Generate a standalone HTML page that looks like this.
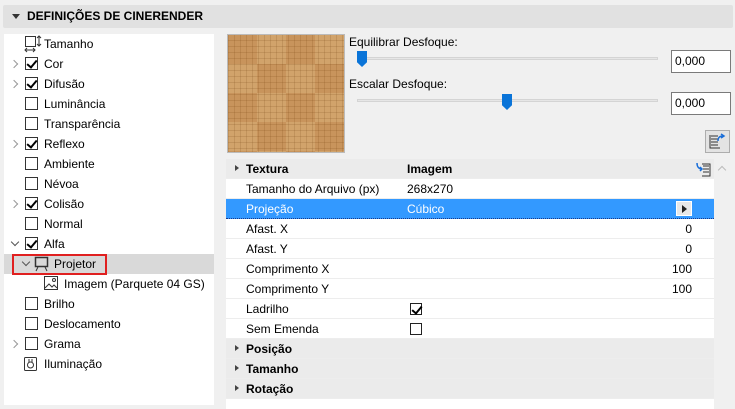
<!DOCTYPE html>
<html><head><meta charset="utf-8"><style>
*{margin:0;padding:0;box-sizing:border-box}
body{width:735px;height:405px;background:#f0f0f0;font-family:"Liberation Sans",sans-serif;font-size:12px;color:#000;position:relative;overflow:hidden}
.abs{position:absolute}
#hdr{left:3px;top:5px;width:730px;height:23px;background:#e1e1e1;border-radius:2px;font-weight:bold;font-size:12px;line-height:23px;padding-left:24px}
#hdr:before{content:"";position:absolute;left:9px;top:9px;border-left:4px solid transparent;border-right:4px solid transparent;border-top:5px solid #333}
#left{left:4px;top:34px;width:210px;height:371px;background:#fff}
.r{position:absolute;left:0;width:210px;height:20px;line-height:20px}
.r .t{position:absolute;left:40px}
.cb{position:absolute;left:21px;top:3px;width:13px;height:13px;border:1px solid #333;background:#fff}
.cb.c:after{content:"";position:absolute;left:3px;top:0px;width:4px;height:8px;border:solid #000;border-width:0 2px 2px 0;transform:rotate(40deg)}
.ch{position:absolute;left:7px;top:7px;width:6px;height:6px;border:solid #999;border-width:1.5px 1.5px 0 0;transform:rotate(45deg)}
.cd{position:absolute;left:8px;top:5px;width:6px;height:6px;border:solid #555;border-width:0 1.5px 1.5px 0;transform:rotate(45deg)}
#tex{left:227px;top:34px;width:118px;height:119px;border:1px solid #bbb;background:
repeating-linear-gradient(90deg,rgba(120,70,20,.18) 0 1px,transparent 1px 6px),
repeating-linear-gradient(0deg,rgba(120,70,20,.18) 0 1px,transparent 1px 6px),
conic-gradient(from 0deg at 50% 50%,#d1a36b 0 25%,#c8945c 0 50%,#d1a36b 0 75%,#c8945c 0);background-size:6px 6px,6px 6px,58px 58px}
.lbl{font-size:12px}
.track{height:3px;background:#e6e6e6;border:1px solid #d4d4d4}
.thumb{width:10px;height:16px;background:#0a74d8;clip-path:polygon(0 0,100% 0,100% 70%,50% 100%,0 70%)}
.inp{width:60px;height:23px;background:#fff;border:1px solid #7a7a7a;line-height:21px;padding-left:3px}
#tbl{left:226px;top:159px;width:488px}
.tr{position:relative;height:20px;line-height:20px;border-bottom:1px solid #ededed;background:#fff}
.tr .a{position:absolute;left:20px}
.tr .b{position:absolute;left:181px}
.tr .v{position:absolute;right:22px}
.g{background:#ebebeb;font-weight:bold}
.g:before{content:"";position:absolute;left:9px;top:6px;border-top:3.5px solid transparent;border-bottom:3.5px solid transparent;border-left:4px solid #444}
.sel{background:#3399ff;color:#fff;border-bottom:1px dotted #1a3a8a}
.tcb{position:absolute;left:184px;top:4px;width:12px;height:12px;border:1px solid #222;background:#fff}
</style></head><body>
<div id="hdr" class="abs">DEFINIÇÕES DE CINERENDER</div>
<div id="left" class="abs">
<div class="r" style="top:0"><svg class="abs" style="left:20px;top:1px" width="18" height="18"><rect x="1.5" y="1.5" width="10" height="10" fill="none" stroke="#333"/><path d="M15 1v10M13 3l2-2 2 2M13 9l2 2 2-2M1 15h10M3 13l-2 2 2 2M9 13l2 2-2 2" stroke="#333" fill="none"/></svg><span class="t">Tamanho</span></div>
<div class="r" style="top:20px"><i class="ch"></i><i class="cb c"></i><span class="t">Cor</span></div>
<div class="r" style="top:40px"><i class="ch"></i><i class="cb c"></i><span class="t">Difusão</span></div>
<div class="r" style="top:60px"><i class="cb"></i><span class="t">Luminância</span></div>
<div class="r" style="top:80px"><i class="cb"></i><span class="t">Transparência</span></div>
<div class="r" style="top:100px"><i class="ch"></i><i class="cb c"></i><span class="t">Reflexo</span></div>
<div class="r" style="top:120px"><i class="cb"></i><span class="t">Ambiente</span></div>
<div class="r" style="top:140px"><i class="cb"></i><span class="t">Névoa</span></div>
<div class="r" style="top:160px"><i class="ch"></i><i class="cb c"></i><span class="t">Colisão</span></div>
<div class="r" style="top:180px"><i class="cb"></i><span class="t">Normal</span></div>
<div class="r" style="top:200px"><i class="cd"></i><i class="cb c"></i><span class="t">Alfa</span></div>
<div class="r" style="top:220px;background:#d9d9d9"><div class="abs" style="left:8px;top:0;width:95px;height:21px;border:2px solid #e02020"></div><i class="cd" style="left:19px"></i><svg class="abs" style="left:30px;top:2px" width="16" height="16"><rect x="1.5" y="1.5" width="12" height="9" fill="none" stroke="#333" stroke-width="1.5"/><path d="M4 11l-2 4M11 11l2 4" stroke="#333"/></svg><span class="t" style="left:50px">Projetor</span></div>
<div class="r" style="top:240px"><svg class="abs" style="left:40px;top:2px" width="15" height="15"><rect x="0.5" y="0.5" width="13" height="13" fill="#fff" stroke="#333"/><path d="M1 12l4-4 3 3 2-2 3 3" stroke="#333" fill="none"/><circle cx="10" cy="4" r="1.5" fill="none" stroke="#333"/></svg><span class="t" style="left:60px">Imagem (Parquete 04 GS)</span></div>
<div class="r" style="top:260px"><i class="cb"></i><span class="t">Brilho</span></div>
<div class="r" style="top:280px"><i class="cb"></i><span class="t">Deslocamento</span></div>
<div class="r" style="top:300px"><i class="ch"></i><i class="cb"></i><span class="t">Grama</span></div>
<div class="r" style="top:320px"><svg class="abs" style="left:20px;top:2px" width="14" height="16"><rect x="0.5" y="1.5" width="12" height="13" rx="1" fill="none" stroke="#333"/><circle cx="6.5" cy="9" r="3" fill="none" stroke="#333"/><path d="M5 3v3M8 3v3" stroke="#333"/></svg><span class="t">Iluminação</span></div>
</div>
<div id="tex" class="abs"></div>
<div class="abs lbl" style="left:349px;top:35px">Equilibrar Desfoque:</div>
<div class="abs track" style="left:357px;top:57px;width:301px"></div>
<div class="abs thumb" style="left:357px;top:51px"></div>
<div class="abs inp" style="left:671px;top:50px">0,000</div>
<div class="abs lbl" style="left:349px;top:77px">Escalar Desfoque:</div>
<div class="abs track" style="left:357px;top:99px;width:301px"></div>
<div class="abs thumb" style="left:502px;top:94px"></div>
<div class="abs inp" style="left:671px;top:92px">0,000</div>
<div class="abs" style="left:705px;top:130px;width:25px;height:23px;background:#e3e3e3;border:1px solid #adadad"><svg width="23" height="21"><path d="M5 5h7M5 8h7M5 11h7M5 14h7M4 4v13h10" stroke="#333" fill="none"/><path d="M12 10c0-4 2-5 5-5M15 3l3 2-3 2" stroke="#1a6ed8" stroke-width="1.5" fill="none"/></svg></div>
<div id="tbl" class="abs">
<div class="tr g"><span class="a">Textura</span><span class="b">Imagem</span><svg class="abs" style="left:469px;top:2px" width="18" height="16"><path d="M8 5h6M8 8h6M8 11h6M7 3h8v12H7" stroke="#333" fill="none"/><path d="M2 2c0 4 2 6 5 6M5 6l2 2-2 2" stroke="#1a6ed8" stroke-width="1.5" fill="none"/></svg></div>
<div class="tr"><span class="a">Tamanho do Arquivo (px)</span><span class="b">268x270</span></div>
<div class="tr sel"><span class="a">Projeção</span><span class="b">Cúbico</span><div class="abs" style="left:450px;top:2px;width:16px;height:15px;background:#e8e8e8;border:1px solid #fff"><div class="abs" style="left:5px;top:3px;border-top:4px solid transparent;border-bottom:4px solid transparent;border-left:5px solid #222"></div></div></div>
<div class="tr"><span class="a">Afast. X</span><span class="v">0</span></div>
<div class="tr"><span class="a">Afast. Y</span><span class="v">0</span></div>
<div class="tr"><span class="a">Comprimento X</span><span class="v">100</span></div>
<div class="tr"><span class="a">Comprimento Y</span><span class="v">100</span></div>
<div class="tr"><span class="a">Ladrilho</span><i class="tcb"><i class="cb c" style="left:-1px;top:-1px;width:12px;height:12px;border-color:#222"></i></i></div>
<div class="tr"><span class="a">Sem Emenda</span><i class="tcb"></i></div>
<div class="tr g"><span class="a">Posição</span></div>
<div class="tr g"><span class="a">Tamanho</span></div>
<div class="tr g"><span class="a">Rotação</span></div>
<div class="tr" style="height:10px;border:0"></div>
</div>
<div class="abs" style="left:719px;top:167px;width:6px;height:6px;border:solid #bbb;border-width:1.5px 0 0 1.5px;transform:rotate(45deg)"></div>
</body></html>
